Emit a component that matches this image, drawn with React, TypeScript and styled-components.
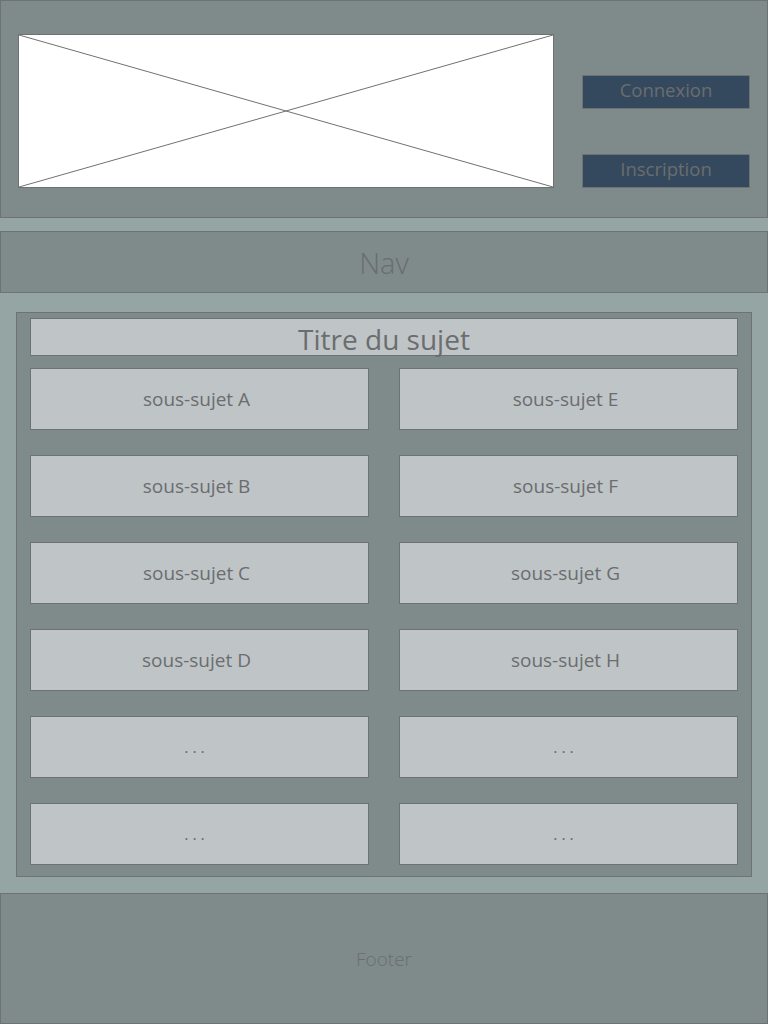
import styled, { createGlobalStyle } from 'styled-components';

const GlobalStyle = createGlobalStyle`
  html, body {
    margin: 0;
    padding: 0;
    background: #94a5a4;
    font-family: 'Open Sans', 'Noto Sans', sans-serif;
  }
  * {
    box-sizing: border-box;
  }
`;

const borderColor = '#6f7272';
const darkPanel = '#7e8b8a';
const lightBox = '#bfc4c7';
const textColor = '#6b6d6e';

const Page = styled.div`
  width: 768px;
  min-height: 1024px;
  display: flex;
  flex-direction: column;
`;

const Header = styled.header`
  height: 218px;
  display: flex;
  align-items: flex-start;
  padding: 33px 17px 0 17px;
  background: ${darkPanel};
  border: 1px solid ${borderColor};
`;

const Placeholder = styled.div`
  width: 536px;
  height: 154px;
  background: #ffffff;
  border: 1px solid ${borderColor};

  svg {
    display: block;
    width: 100%;
    height: 100%;
  }
`;

const Actions = styled.div`
  display: flex;
  flex-direction: column;
  gap: 45px;
  margin-left: 28px;
  padding-top: 41px;
`;

const ActionButton = styled.button`
  width: 168px;
  height: 34px;
  padding: 0 0 4px;
  background: #34495e;
  border: 1px solid ${borderColor};
  color: ${textColor};
  font-family: inherit;
  font-size: 18.5px;
  line-height: 1;
`;

const Nav = styled.nav`
  height: 62px;
  margin-top: 13px;
  display: flex;
  align-items: center;
  justify-content: center;
  background: ${darkPanel};
  border: 1px solid ${borderColor};
  color: ${textColor};
  font-size: 29px;
  font-weight: 300;
`;

const Topic = styled.main`
  margin: 19px 16px 0;
  padding: 5px 13px 11px;
  background: ${darkPanel};
  border: 1px solid ${borderColor};
`;

const TopicTitle = styled.h1`
  margin: 0;
  height: 38px;
  display: flex;
  align-items: center;
  justify-content: center;
  background: ${lightBox};
  border: 1px solid ${borderColor};
  color: ${textColor};
  font-size: 28px;
  font-weight: 400;
  line-height: 1;
  padding-top: 4px;
`;

const SubjectGrid = styled.div`
  margin-top: 12px;
  display: grid;
  grid-template-columns: 1fr 1fr;
  grid-auto-flow: column;
  grid-template-rows: repeat(6, 62px);
  column-gap: 30px;
  row-gap: 25px;
`;

const Subject = styled.div<{ $dots?: boolean }>`
  display: flex;
  align-items: center;
  justify-content: center;
  background: ${lightBox};
  border: 1px solid ${borderColor};
  color: ${textColor};
  font-size: ${({ $dots }) => ($dots ? '16px' : '19px')};
  letter-spacing: ${({ $dots }) => ($dots ? '4px' : '0')};
  padding: 0 6px 0 0;
`;

const Footer = styled.footer`
  height: 131px;
  margin-top: 16px;
  display: flex;
  align-items: center;
  justify-content: center;
  background: ${darkPanel};
  border: 1px solid ${borderColor};
  color: ${textColor};
  font-size: 19px;
  font-weight: 300;
`;

const subjects = [
  'sous-sujet A',
  'sous-sujet B',
  'sous-sujet C',
  'sous-sujet D',
  '...',
  '...',
  'sous-sujet E',
  'sous-sujet F',
  'sous-sujet G',
  'sous-sujet H',
  '...',
  '...',
];

export default function App() {
  return (
    <>
      <GlobalStyle />
      <Page>
        <Header>
          <Placeholder>
            <svg viewBox="0 0 534 152" preserveAspectRatio="none">
              <line x1="0" y1="0" x2="534" y2="152" stroke="#6f7272" strokeWidth="1" />
              <line x1="534" y1="0" x2="0" y2="152" stroke="#6f7272" strokeWidth="1" />
            </svg>
          </Placeholder>
          <Actions>
            <ActionButton>Connexion</ActionButton>
            <ActionButton>Inscription</ActionButton>
          </Actions>
        </Header>

        <Nav>Nav</Nav>

        <Topic>
          <TopicTitle>Titre du sujet</TopicTitle>
          <SubjectGrid>
            {subjects.map((label, i) => (
              <Subject key={'subject-' + i} $dots={label === '...'}>
                {label}
              </Subject>
            ))}
          </SubjectGrid>
        </Topic>

        <Footer>Footer</Footer>
      </Page>
    </>
  );
}
